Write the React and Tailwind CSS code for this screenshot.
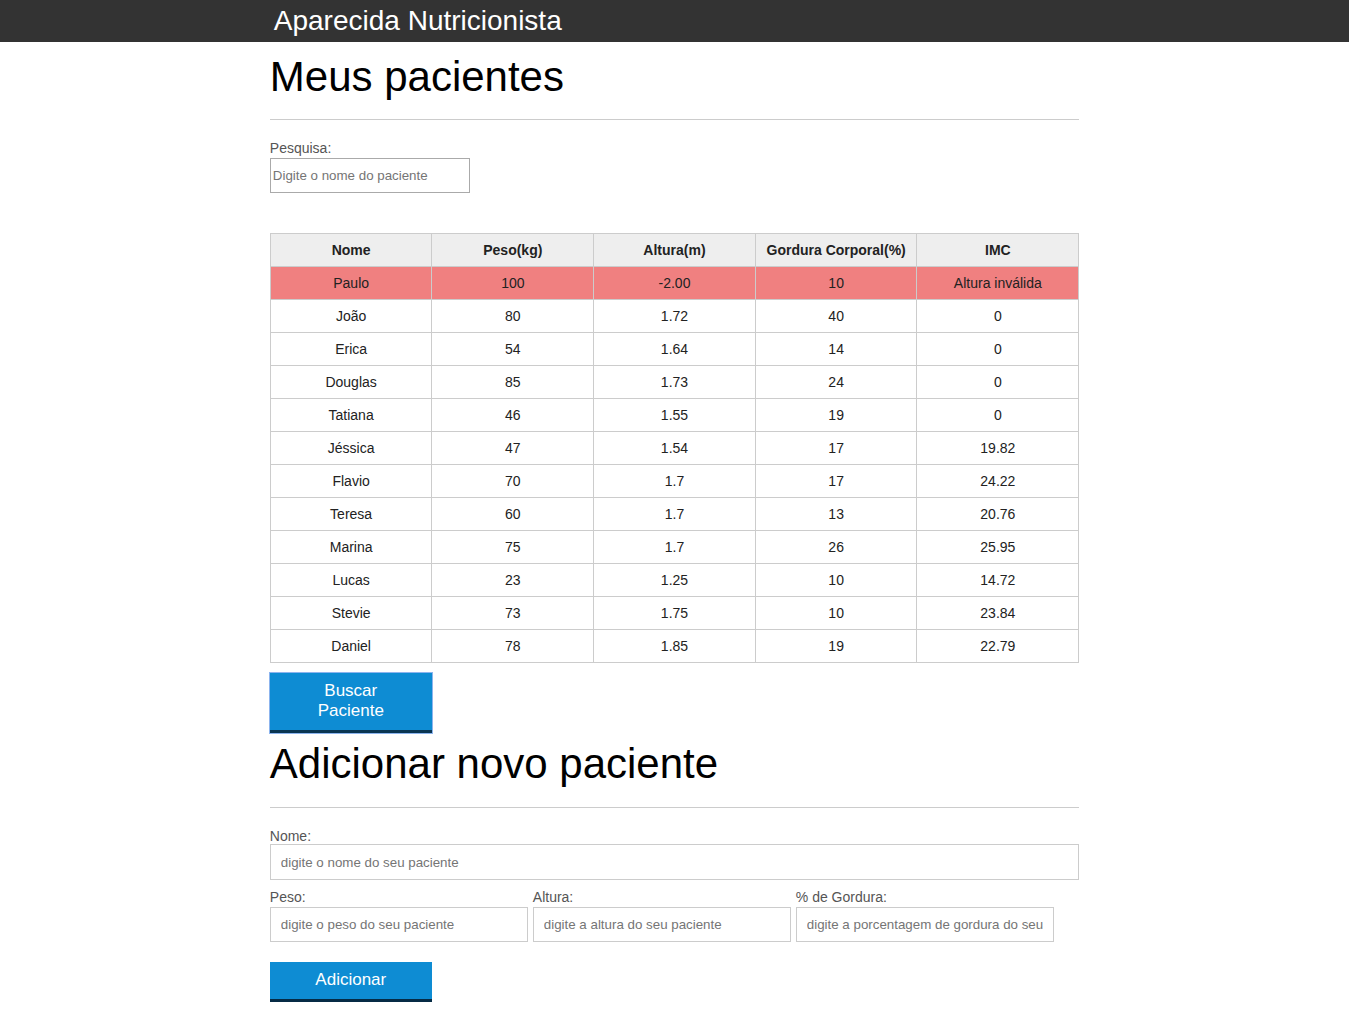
import React from "react";

const pacientes = [
  { nome: "Paulo", peso: "100", altura: "-2.00", gordura: "10", imc: "Altura inválida", invalido: true },
  { nome: "João", peso: "80", altura: "1.72", gordura: "40", imc: "0" },
  { nome: "Erica", peso: "54", altura: "1.64", gordura: "14", imc: "0" },
  { nome: "Douglas", peso: "85", altura: "1.73", gordura: "24", imc: "0" },
  { nome: "Tatiana", peso: "46", altura: "1.55", gordura: "19", imc: "0" },
  { nome: "Jéssica", peso: "47", altura: "1.54", gordura: "17", imc: "19.82" },
  { nome: "Flavio", peso: "70", altura: "1.7", gordura: "17", imc: "24.22" },
  { nome: "Teresa", peso: "60", altura: "1.7", gordura: "13", imc: "20.76" },
  { nome: "Marina", peso: "75", altura: "1.7", gordura: "26", imc: "25.95" },
  { nome: "Lucas", peso: "23", altura: "1.25", gordura: "10", imc: "14.72" },
  { nome: "Stevie", peso: "73", altura: "1.75", gordura: "10", imc: "23.84" },
  { nome: "Daniel", peso: "78", altura: "1.85", gordura: "19", imc: "22.79" },
];

export default function App() {
  return (
    <div className="min-h-screen bg-white font-['Liberation_Sans',Arial,sans-serif] text-black">
      {/* HEADER */}
      <header className="h-[42px] bg-[#333333]">
        <div className="mx-auto w-3/5 pl-1">
          <h1 className="text-[28px] leading-[42px] text-white">Aparecida Nutricionista</h1>
        </div>
      </header>

      <main className="mx-auto w-3/5">
        {/* MEUS PACIENTES */}
        <h2 className="mt-[11px] text-[42px] leading-[48px]">Meus pacientes</h2>
        <hr className="mt-[18px] border-0 border-t border-[#cccccc]" />

        <label className="mt-[21px] block text-sm leading-[15px] text-[#555555]">Pesquisa:</label>
        <input
          type="text"
          placeholder="Digite o nome do paciente"
          className="mt-[2px] block h-[35px] w-[200px] border border-[#aaaaaa] px-[2px] text-[13.33px] placeholder:text-[#757575] outline-none"
        />

        <table className="mt-[40px] w-full table-fixed border-collapse border border-[#cccccc] text-sm text-[#222222]">
          <thead className="bg-[#eeeeee]">
            <tr>
              <th className="border border-[#cccccc] py-2 leading-4 font-bold">Nome</th>
              <th className="border border-[#cccccc] py-2 leading-4 font-bold">Peso(kg)</th>
              <th className="border border-[#cccccc] py-2 leading-4 font-bold">Altura(m)</th>
              <th className="border border-[#cccccc] py-2 leading-4 font-bold">Gordura Corporal(%)</th>
              <th className="border border-[#cccccc] py-2 leading-4 font-bold">IMC</th>
            </tr>
          </thead>
          <tbody>
            {pacientes.map((p) => (
              <tr key={p.nome} className={p.invalido ? "bg-[#f08080]" : "bg-white"}>
                <td className="border border-[#cccccc] py-2 text-center leading-4">{p.nome}</td>
                <td className="border border-[#cccccc] py-2 text-center leading-4">{p.peso}</td>
                <td className="border border-[#cccccc] py-2 text-center leading-4">{p.altura}</td>
                <td className="border border-[#cccccc] py-2 text-center leading-4">{p.gordura}</td>
                <td className="border border-[#cccccc] py-2 text-center leading-4">{p.imc}</td>
              </tr>
            ))}
          </tbody>
        </table>

        <button className="mt-[10px] block w-[162px] border-b-[3px] border-[#0a3552] bg-[#0e8cd3] px-6 pt-2 pb-[9px] text-[17px] leading-5 text-white ring-1 ring-[#8cb4ee]">
          Buscar Paciente
        </button>

        {/* ADICIONAR */}
        <h2 className="mt-[7px] text-[42px] leading-[48px]">Adicionar novo paciente</h2>
        <hr className="mt-[19px] border-0 border-t border-[#cccccc]" />

        <form onSubmit={(e) => e.preventDefault()}>
          <label className="mt-[21px] block text-sm leading-[15px] text-[#555555]">Nome:</label>
          <input
            type="text"
            placeholder="digite o nome do seu paciente"
            className="block h-[36px] w-full border border-[#cccccc] px-[10px] text-[13.33px] placeholder:text-[#757575] outline-none"
          />

          <div className="mt-[10px] flex gap-[5px]">
            <div className="w-[258px]">
              <label className="block text-sm leading-[15px] text-[#555555]">Peso:</label>
              <input
                type="text"
                placeholder="digite o peso do seu paciente"
                className="mt-[2px] block h-[35px] w-full border border-[#cccccc] px-[10px] text-[13.33px] placeholder:text-[#757575] outline-none"
              />
            </div>
            <div className="w-[258px]">
              <label className="block text-sm leading-[15px] text-[#555555]">Altura:</label>
              <input
                type="text"
                placeholder="digite a altura do seu paciente"
                className="mt-[2px] block h-[35px] w-full border border-[#cccccc] px-[10px] text-[13.33px] placeholder:text-[#757575] outline-none"
              />
            </div>
            <div className="w-[258px]">
              <label className="block text-sm leading-[15px] text-[#555555]">% de Gordura:</label>
              <input
                type="text"
                placeholder="digite a porcentagem de gordura do seu paciente"
                className="mt-[2px] block h-[35px] w-full border border-[#cccccc] px-[10px] text-[13.33px] placeholder:text-[#757575] outline-none"
              />
            </div>
          </div>

          <button className="mt-[20px] block w-[162px] border-b-[3px] border-[#062b45] bg-[#0e8cd3] pt-2 pb-[9px] text-[17px] leading-5 text-white">
            Adicionar
          </button>
        </form>
      </main>
    </div>
  );
}
